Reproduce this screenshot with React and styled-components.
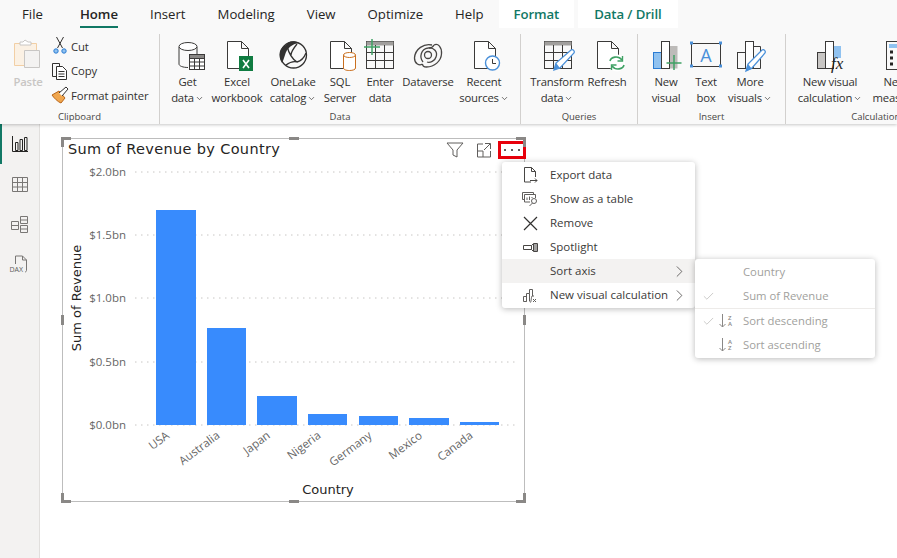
import styled, { createGlobalStyle } from "styled-components";
import { Check, ChevronRight, ChevronDown } from "lucide-react";

const uiFont = `"Open Sans", "Noto Sans", sans-serif`;

const GlobalStyle = createGlobalStyle`
  html, body { margin: 0; padding: 0; background: #fff; }
  body { font-family: ${uiFont}; color: #252423; }
`;

const INK = "#3b3a39";
const BLUE = "#4a90d9";
const GREEN = "#3fa164";

const GetDataIcon = () => (
  <Glyph viewBox="0 0 36 36" fill="none" stroke={INK}>
    <path d="M9 9v17c0 2 4 3.500 9 3.500M27 9v7" />
    <ellipse cx="18" cy="8.500" rx="9" ry="4" fill="#fff" />
    <rect x="19.500" y="16.500" width="15" height="15" fill="#fff" />
    <rect x="19.500" y="16.500" width="15" height="4" fill="#8a8886" />
    <path d="M19.500 24h15M19.500 28h15M24.500 20v11M29.500 20v11" />
  </Glyph>
);

const FileShape = () => <path d="M8.500 3.500h14l7 7v20h-21z M22.500 3.500v7h7" fill="#fff" stroke={INK} />;

const ExcelIcon = () => (
  <Glyph viewBox="0 0 36 36" fill="none">
    <FileShape />
    <rect x="20" y="18" width="14" height="15" fill="#107c41" />
    <path d="M24 22l6 8M30 22l-6 8" stroke="#fff" strokeWidth="1.600" />
  </Glyph>
);

const OneLakeIcon = () => (
  <Glyph viewBox="0 0 36 36" fill="none" stroke="#323130" strokeWidth="1.300">
    <circle cx="18.500" cy="17" r="13" />
    <path d="M7 25C2 17 5 9 11 7c2-4 8-5 13-2-7 1-12 5-14 12-1 3-2 6-3 8z" fill="#323130" stroke="none" />
    <path d="M12 8c2 8 5 13 10 16 4-1 7-4 9-9M11 27c4-3 8-4 11-3M22 6c-4 5-6 8-6 11" />
  </Glyph>
);

const SqlIcon = () => (
  <Glyph viewBox="0 0 36 36" fill="none">
    <FileShape />
    <path d="M21.500 17v13c0 1.500 2.500 2.500 6 2.500s6-1 6-2.500V17" fill="#fff" stroke="#ca6f1e" />
    <ellipse cx="27.500" cy="17" rx="6" ry="2.500" fill="#fff" stroke="#ca6f1e" />
  </Glyph>
);

const EnterDataIcon = () => (
  <Glyph viewBox="0 0 36 36" fill="none" stroke={INK}>
    <rect x="4.500" y="3.500" width="27" height="27" />
    <rect x="4.500" y="3.500" width="27" height="4" fill="#a19f9d" stroke="none" />
    <path d="M4.500 14.500h27M4.500 22.500h27M13.500 7v23M22.500 7v23" />
    <path d="M10 1v16M2 9h16" stroke={GREEN} strokeWidth="1.500" />
  </Glyph>
);

const DataverseIcon = () => (
  <Glyph viewBox="0 0 36 36" fill="none" stroke="#484644" strokeWidth="1.300">
    <path d="M22 7C14 5 5 11 4.500 20c0 6 5 8 8 6" />
    <path d="M24 7c4-2 8 2 7.500 9-.5 7-7 13-15 13-2 0-4-1-4-3" />
    <path d="M13 24c-4-5-2-13 5-14 6-1 10 4 8 9-1 4-6 6-9 5" />
    <path d="M24 7c-1 2-3 3-5 3" />
    <circle cx="18" cy="17" r="3.500" />
  </Glyph>
);

const RecentIcon = () => (
  <Glyph viewBox="0 0 36 36" fill="none">
    <FileShape />
    <circle cx="26.500" cy="25" r="7" fill="#fff" stroke={BLUE} strokeWidth="1.400" />
    <path d="M26.500 21v4.500h3.500" stroke={INK} />
  </Glyph>
);

const TransformIcon = () => (
  <Glyph viewBox="0 0 36 36" fill="none" stroke={INK}>
    <rect x="5.500" y="3.500" width="27" height="27" />
    <rect x="5.500" y="3.500" width="27" height="4" fill="#a19f9d" stroke="none" />
    <path d="M5.500 14.500h27M5.500 22.500h27M14.500 7v23M23.500 7v23" />
    <path d="M15 32l2-7L32 12c2-1 4 1 3 3L21 30z" fill="#fff" stroke={BLUE} strokeWidth="1.300" />
    <path d="M15 32l2-7 4 5z" fill={BLUE} stroke="none" />
  </Glyph>
);

const RefreshIcon = () => (
  <Glyph viewBox="0 0 36 36" fill="none">
    <FileShape />
    <circle cx="28" cy="25" r="8.500" fill="#fff" stroke="none" />
    <path d="M21 23c1-4 8-6 12-1M35 27c-1 4-8 6-12 1" stroke={GREEN} strokeWidth="1.600" />
    <path d="M33.500 18v5h-5M22.500 32v-5h5" stroke={GREEN} strokeWidth="1.400" />
  </Glyph>
);

const NewVisualIcon = () => (
  <Glyph viewBox="0 0 36 36" fill="none" stroke={INK}>
    <rect x="5.500" y="14.500" width="8" height="16" fill="#90c2f0" stroke="#2b7cd3" />
    <rect x="13.500" y="3.500" width="8" height="27" fill="#fff" />
    <rect x="22" y="8" width="7.500" height="22.500" fill="#bdbbb9" stroke="none" />
    <path d="M26 17v15M18.500 25h15" stroke={GREEN} strokeWidth="1.500" />
  </Glyph>
);

const TextBoxIcon = () => (
  <Glyph viewBox="0 0 36 36" fill="none">
    <rect x="3.500" y="5.500" width="29" height="23" stroke={INK} />
    <path d="M2 5h3M31 5h3M2 28h3M31 28h3" stroke={BLUE} strokeWidth="3" />
    <text x="18" y="24" textAnchor="middle" fontSize="18" fontFamily={uiFont} fill={BLUE} stroke="none">A</text>
  </Glyph>
);

const MoreVisualsIcon = () => (
  <Glyph viewBox="0 0 36 36" fill="none" stroke={INK}>
    <rect x="5.500" y="14.500" width="8" height="16" />
    <rect x="13.500" y="3.500" width="8" height="27" fill="#fff" />
    <path d="M21.500 8.500h7v22h-7" />
    <path d="M14 33l2-7L30 12c2-1 4 1 3 3L20 30z" fill="#fff" stroke={BLUE} strokeWidth="1.300" />
    <path d="M14 33l2-7 4 5z" fill={BLUE} stroke="none" />
  </Glyph>
);

const VisualCalcIcon = () => (
  <Glyph viewBox="0 0 36 36" fill="none" stroke={INK}>
    <rect x="5.500" y="14.500" width="8" height="16" fill="#c8c6c4" />
    <rect x="13.500" y="3.500" width="8" height="27" fill="#fff" />
    <rect x="22" y="8" width="7" height="12" fill="#90c2f0" stroke="none" />
    <text x="19" y="31" fontSize="17" fontStyle="italic" fontFamily="Liberation Serif, serif" fill="#252423" stroke="none">fx</text>
  </Glyph>
);

const MeasureIcon = () => (
  <Glyph viewBox="0 0 36 36" fill="none" stroke={INK}>
    <rect x="9.500" y="3.500" width="27" height="28" />
    <rect x="12" y="6" width="22" height="4" fill="#90c2f0" stroke="none" />
    <path d="M13 14h3M20 14h3M27 14h3M13 20h3M20 20h3M27 20h3M13 26h3M20 26h3M27 26h3" stroke="#252423" strokeWidth="3" />
  </Glyph>
);

const PasteIcon = () => (
  <Glyph viewBox="0 0 36 36" fill="none">
    <path d="M4.500 5.500h22v22h-22z" fill="#fbf1e4" stroke="#f2cfa5" />
    <path d="M10 7V4h3l2-2 3 2h3v3z" fill="#fff" stroke="#c8c6c4" />
    <path d="M14.500 12.500h15v17h-15z" fill="#f3f2f1" stroke="#c8c6c4" />
  </Glyph>
);

const CutIcon = () => (
  <SmallGlyph viewBox="0 0 18 18" fill="none" stroke="#323130">
    <path d="M5.500 0l6 11M12.500 0l-6 11" />
    <circle cx="5" cy="14" r="2.200" stroke="#2b7cd3" fill="#90c2f0" />
    <circle cx="13" cy="14" r="2.200" stroke="#2b7cd3" fill="#90c2f0" />
  </SmallGlyph>
);

const CopyIcon = () => (
  <SmallGlyph viewBox="0 0 18 18" fill="none" stroke="#323130">
    <path d="M5.500 14.500h-4v-13h7v3" />
    <path d="M5.500 4.500h6l4 4v9h-10z M7.500 9.500h6M7.500 12h6M7.500 14.500h6" fill="#fff" />
  </SmallGlyph>
);

const PainterIcon = () => (
  <SmallGlyph viewBox="0 0 18 18" fill="none">
    <path d="M1 9l7-4 6 7-4 5c-3-1-7-5-9-8z" fill="#f0a64e" stroke="#b9661b" />
    <path d="M8 7l7-6 2 2-6 7" fill="#fff" stroke="#323130" />
  </SmallGlyph>
);

const ReportIcon = () => (
  <SideGlyph viewBox="0 0 18 18" fill="none" stroke="#252423">
    <path d="M1.500 1v15.500H17" />
    <path d="M4.500 7.500h2.500v8H4.500zM9 4.500h2.500v11H9zM13.500 2.500H16v13h-2.500z" />
  </SideGlyph>
);

const TableIcon = () => (
  <SideGlyph viewBox="0 0 18 18" fill="none" stroke="#797775">
    <path d="M1.500 2.500h15v14h-15zM1.500 7.500h15M1.500 12h15M6.500 2.500v14M11.500 2.500v14" />
  </SideGlyph>
);

const ModelIcon = () => (
  <SideGlyph viewBox="0 0 18 18" fill="none" stroke="#797775">
    <path d="M.5 6.500h7v8h-7zM.5 10.500h7M9.500 1.500h7v7h-7zM9.500 5h7M9.500 10.500h7v7h-7zM9.500 14h7" />
  </SideGlyph>
);

const DaxIcon = () => (
  <DaxWrap>
    <SideGlyph viewBox="0 0 18 18" fill="none" stroke="#797775">
      <path d="M4.500 9V1h7l4 4v10.500c0 1-1 1.500-1.500 1.500M11.500 1v4h4" />
    </SideGlyph>
    <DaxText>DAX</DaxText>
  </DaxWrap>
);

const FilterIcon = () => (
  <svg width="18" height="16" viewBox="0 0 18 16" fill="none" stroke="#605e5c">
    <path d="M1 1h16l-6 7v7l-4-2V8z" />
  </svg>
);

const FocusIcon = () => (
  <svg width="16" height="16" viewBox="0 0 16 16" fill="none" stroke="#605e5c">
    <path d="M7 2H1.500v13h13V9M9 1.500h5.500V7M14 2L8 8M1.500 9H7v6" />
  </svg>
);

const ExportIcon = () => (
  <svg width="15" height="16" viewBox="0 0 15 16" fill="none" stroke="#484644">
    <path d="M8 15H1.500V.5h7l4 4V10M8.500.5v4h4M7 13.500h7M12 11.500l2 2-2 2" />
  </svg>
);

const ShowTableIcon = () => (
  <svg width="16" height="16" viewBox="0 0 16 16" fill="none" stroke="#605e5c">
    <path d="M2.500 8.500H.5v-7h11V3M2.500 3.500h11V7M2.500 3.500V11H8M5 9V6.500M7.500 9V5.500M10 7V6" />
    <circle cx="12" cy="10" r="2.500" />
    <path d="M10.500 12L7.500 15" />
  </svg>
);

const RemoveIcon = () => (
  <svg width="15" height="15" viewBox="0 0 15 15" fill="none" stroke="#323130" strokeWidth="1.200">
    <path d="M1 1l13 13M14 1L1 14" />
  </svg>
);

const SpotlightIcon = () => (
  <svg width="15" height="9" viewBox="0 0 15 9" fill="none" stroke="#484644">
    <path d="M.5 2.500h8v4h-8zM8.500 2.500l2-2v8l-2-2M11 .5h3.500v8H11zM13 .5v8" />
  </svg>
);

const CalcIcon = () => (
  <svg width="14" height="15" viewBox="0 0 14 15" fill="none" stroke="#605e5c">
    <path d="M.5 13.500v-5h3v5zM3.500 13.500v-8h3v8M6.500 5.500V1.500H9.500V8" />
    <path d="M7 14.500c1.500 0 1-5 2-6.500h2M10 11l3 3M13 11l-3 3" />
  </svg>
);

const SortDownIcon = () => (
  <SortIcon>
    <svg width="7" height="14" viewBox="0 0 7 14" fill="none" stroke="#8a8886">
      <path d="M3.500 0v13M.5 10l3 3 3-3" />
    </svg>
    <SortLetters><span>Z</span><span>A</span></SortLetters>
  </SortIcon>
);

const SortUpIcon = () => (
  <SortIcon>
    <svg width="7" height="14" viewBox="0 0 7 14" fill="none" stroke="#8a8886">
      <path d="M3.500 0v13M.5 10l3 3 3-3" />
    </svg>
    <SortLetters><span>A</span><span>Z</span></SortLetters>
  </SortIcon>
);

const clipboardRows = [
  { label: "Cut", Icon: CutIcon },
  { label: "Copy", Icon: CopyIcon },
  { label: "Format painter", Icon: PainterIcon },
];

const groups = [
  {
    name: "Data",
    width: 361,
    items: [
      { w: 47, Icon: GetDataIcon, lines: ["Get", "data"], caret: true },
      { w: 52, Icon: ExcelIcon, lines: ["Excel", "workbook"] },
      { w: 60, Icon: OneLakeIcon, lines: ["OneLake", "catalog"], caret: true },
      { w: 34, Icon: SqlIcon, lines: ["SQL", "Server"] },
      { w: 46, Icon: EnterDataIcon, lines: ["Enter", "data"] },
      { w: 50, Icon: DataverseIcon, lines: ["Dataverse"] },
      { w: 62, Icon: RecentIcon, lines: ["Recent", "sources"], caret: true },
    ],
  },
  {
    name: "Queries",
    width: 117,
    items: [
      { w: 64, Icon: TransformIcon, lines: ["Transform", "data"], caret: true },
      { w: 36, Icon: RefreshIcon, lines: ["Refresh"] },
    ],
  },
  {
    name: "Insert",
    width: 148,
    pad: 6,
    items: [
      { w: 44, Icon: NewVisualIcon, lines: ["New", "visual"] },
      { w: 36, Icon: TextBoxIcon, lines: ["Text", "box"] },
      { w: 52, Icon: MoreVisualsIcon, lines: ["More", "visuals"], caret: true },
    ],
  },
  {
    name: "Calculations",
    width: 184,
    pad: 6,
    last: true,
    items: [
      { w: 76, Icon: VisualCalcIcon, lines: ["New visual", "calculation"], caret: true },
      { w: 54, Icon: MeasureIcon, lines: ["New", "measure"] },
    ],
  },
];

const axisTicks = [
  { label: "$2.0bn", y: 172 },
  { label: "$1.5bn", y: 235 },
  { label: "$1.0bn", y: 298 },
  { label: "$0.5bn", y: 362 },
  { label: "$0.0bn", y: 425 },
];

const bars = [
  { country: "USA", x: 156, w: 40, top: 210 },
  { country: "Australia", x: 207, w: 39, top: 328 },
  { country: "Japan", x: 257, w: 40, top: 396 },
  { country: "Nigeria", x: 308, w: 39, top: 414 },
  { country: "Germany", x: 359, w: 39, top: 416 },
  { country: "Mexico", x: 409, w: 40, top: 418 },
  { country: "Canada", x: 460, w: 39, top: 422 },
];

const menuRows = [
  { label: "Export data", Icon: ExportIcon },
  { label: "Show as a table", Icon: ShowTableIcon },
  { label: "Remove", Icon: RemoveIcon },
  { label: "Spotlight", Icon: SpotlightIcon },
  { label: "Sort axis", active: true, more: true },
  { label: "New visual calculation", Icon: CalcIcon, more: true },
];

const App = () => {
  return (
    <Page>
      <GlobalStyle />
      <Ribbon>
        <Tabs>
          <Tab $left={22} $right={21}>File</Tab>
          <Tab $active>Home</Tab>
          <Tab>Insert</Tab>
          <Tab>Modeling</Tab>
          <Tab>View</Tab>
          <Tab>Optimize</Tab>
          <Tab $right={15}>Help</Tab>
          <ContextTab $pad={15}>Format</ContextTab>
          <ContextTab $pad={16}>Data / Drill</ContextTab>
        </Tabs>
        <Groups>
          <Group $width={160}>
            <GroupBody $pad={8}>
              <RibbonItem $width={40}>
                <IconSlot><PasteIcon /></IconSlot>
                <ItemLabel $disabled>Paste</ItemLabel>
              </RibbonItem>
              <SmallColumn>
                {clipboardRows.map(({ label, Icon }) => (
                  <SmallRow key={label}>
                    <Icon />
                    <span>{label}</span>
                  </SmallRow>
                ))}
              </SmallColumn>
            </GroupBody>
            <GroupName>Clipboard</GroupName>
          </Group>
          {groups.map((group) => (
            <Group key={group.name} $width={group.width} $last={group.last}>
              <GroupBody $pad={group.pad ?? 4}>
                {group.items.map(({ w, Icon, lines, caret }) => (
                  <RibbonItem key={lines.join(" ")} $width={w}>
                    <IconSlot><Icon /></IconSlot>
                    {lines.map((line, i) => (
                      <ItemLabel key={line}>
                        {line}
                        {caret && i === lines.length - 1 && <ChevronDown size={9} strokeWidth={1.8} />}
                      </ItemLabel>
                    ))}
                  </RibbonItem>
                ))}
              </GroupBody>
              <GroupName>{group.name}</GroupName>
            </Group>
          ))}
        </Groups>
      </Ribbon>

      <Main>
        <Sidebar>
          <SideButton $active><ReportIcon /></SideButton>
          <SideButton><TableIcon /></SideButton>
          <SideButton><ModelIcon /></SideButton>
          <SideButton><DaxIcon /></SideButton>
        </Sidebar>
        <Canvas>
          <Visual>
            <Handle $corner="tl" />
            <Handle $corner="tr" />
            <Handle $corner="bl" />
            <Handle $corner="br" />
            <MidHandle $side="top" />
            <MidHandle $side="bottom" />
            <MidHandle $side="left" />
            <MidHandle $side="right" />
            <VisualHeader>
              <VisualTitle>Sum of Revenue by Country</VisualTitle>
              <HeaderActions>
                <FilterIcon />
                <FocusIcon />
                <MoreButton>
                  <Dot /><Dot /><Dot />
                </MoreButton>
              </HeaderActions>
            </VisualHeader>
            <Chart viewBox="63 161 458 338" width="458" height="338">
              {axisTicks.map((tick) => (
                <g key={tick.label}>
                  <line x1="135" x2="519" y1={tick.y} y2={tick.y} stroke="#c8c6c4" strokeDasharray="1.500 4.500" />
                  <AxisText x="126" y={tick.y + 4} textAnchor="end">{tick.label}</AxisText>
                </g>
              ))}
              {bars.map((bar) => (
                <g key={bar.country}>
                  <rect x={bar.x} y={bar.top} width={bar.w} height={425 - bar.top} fill="#388bfd" />
                  <AxisText
                    textAnchor="end"
                    transform={`translate(${bar.x + bar.w / 2 - 6} 437) rotate(-37)`}
                  >
                    {bar.country}
                  </AxisText>
                </g>
              ))}
              <AxisTitle textAnchor="middle" transform="translate(81 298) rotate(-90)">Sum of Revenue</AxisTitle>
              <AxisTitle textAnchor="middle" x="328" y="494">Country</AxisTitle>
            </Chart>
          </Visual>

          <Menu>
            {menuRows.map(({ label, Icon, active, more }) => (
              <MenuRow key={label} $active={active}>
                <MenuIcon>{Icon && <Icon />}</MenuIcon>
                <MenuText>{label}</MenuText>
                {more && <ChevronRight size={19} strokeWidth={1} color="#484644" />}
              </MenuRow>
            ))}
          </Menu>

          <SubMenu>
            <SubRow>
              <SubCheck />
              <SubIcon />
              <span>Country</span>
            </SubRow>
            <SubRow>
              <SubCheck><Check size={13} strokeWidth={1} /></SubCheck>
              <SubIcon />
              <span>Sum of Revenue</span>
            </SubRow>
            <SubDivider />
            <SubRow>
              <SubCheck><Check size={13} strokeWidth={1} /></SubCheck>
              <SubIcon><SortDownIcon /></SubIcon>
              <span>Sort descending</span>
            </SubRow>
            <SubRow>
              <SubCheck />
              <SubIcon><SortUpIcon /></SubIcon>
              <span>Sort ascending</span>
            </SubRow>
          </SubMenu>
        </Canvas>
      </Main>
    </Page>
  );
};

const Page = styled.div`
  width: 897px;
  height: 558px;
  overflow: hidden;
  display: flex;
  flex-direction: column;
  background: #fff;
`;

const Ribbon = styled.header`
  position: relative;
  z-index: 2;
  height: 124px;
  flex: none;
  background: #f9f9f9;
  box-shadow: 0 1px 3px rgba(0, 0, 0, 0.22);
`;

const Tabs = styled.nav`
  display: flex;
  height: 28px;
  font-size: 13.2px;
  color: #252423;
`;

const Tab = styled.div`
  position: relative;
  display: flex;
  align-items: center;
  padding: 0 ${(p) => p.$right ?? 16}px 0 ${(p) => p.$left ?? 16}px;
  font-weight: ${(p) => (p.$active ? 600 : 400)};
  &::after {
    content: "";
    display: ${(p) => (p.$active ? "block" : "none")};
    position: absolute;
    left: 16px;
    right: 16px;
    bottom: 0;
    height: 2px;
    background: #117865;
  }
`;

const ContextTab = styled.div`
  display: flex;
  align-items: center;
  padding: 0 ${(p) => p.$pad}px;
  margin-right: 4px;
  background: #fff;
  color: #117865;
  font-weight: 600;
  letter-spacing: -0.1px;
`;

const Groups = styled.div`
  display: flex;
  height: 96px;
  padding-top: 6px;
  box-sizing: border-box;
`;

const Group = styled.section`
  flex: none;
  box-sizing: border-box;
  width: ${(p) => p.$width}px;
  display: flex;
  flex-direction: column;
  border-right: ${(p) => (p.$last ? "none" : "1px solid #d2d0ce")};
`;

const GroupBody = styled.div`
  flex: 1;
  min-height: 0;
  display: flex;
  padding-left: ${(p) => p.$pad}px;
  padding-top: 4px;
`;

const GroupName = styled.div`
  height: 17px;
  line-height: 20px;
  text-align: center;
  font-size: 9.5px;
  color: #484644;
  white-space: nowrap;
`;

const RibbonItem = styled.div`
  flex: none;
  width: ${(p) => p.$width}px;
  display: flex;
  flex-direction: column;
  align-items: center;
`;

const IconSlot = styled.div`
  width: 36px;
  height: 36px;
  flex: none;
`;

const Glyph = styled.svg`
  display: block;
  width: 36px;
  height: 36px;
`;

const SmallGlyph = styled.svg`
  display: block;
  flex: none;
  width: 18px;
  height: 18px;
`;

const SideGlyph = styled.svg`
  display: block;
  width: 18px;
  height: 18px;
`;

const ItemLabel = styled.div`
  height: 16px;
  line-height: 16px;
  white-space: nowrap;
  font-size: 11.3px;
  letter-spacing: -0.2px;
  color: ${(p) => (p.$disabled ? "#c8c6c4" : "#323130")};
  font-weight: ${(p) => (p.$disabled ? 600 : 400)};
  display: flex;
  align-items: center;
  gap: 1px;
`;

const SmallColumn = styled.div`
  display: flex;
  flex-direction: column;
  gap: 8.500px;
  margin-left: 3px;
`;

const SmallRow = styled.div`
  display: flex;
  align-items: center;
  gap: 2px;
  height: 16px;
  font-size: 11.3px;
  letter-spacing: -0.1px;
  color: #323130;
  white-space: nowrap;
`;

const Main = styled.main`
  flex: 1;
  display: flex;
  min-height: 0;
`;

const Sidebar = styled.aside`
  flex: none;
  width: 40px;
  box-sizing: border-box;
  background: #f3f2f1;
  border-right: 1px solid #e1dfdd;
  display: flex;
  flex-direction: column;
`;

const SideButton = styled.div`
  height: 40px;
  display: flex;
  align-items: center;
  justify-content: center;
  box-shadow: ${(p) => (p.$active ? "inset 2px 0 0 #117865" : "none")};
`;

const DaxWrap = styled.div`
  position: relative;
  width: 18px;
  height: 18px;
`;

const DaxText = styled.span`
  position: absolute;
  left: -1px;
  bottom: 0;
  font-size: 7px;
  line-height: 7px;
  color: #605e5c;
  background: #f3f2f1;
`;

const Canvas = styled.div`
  position: relative;
  flex: 1;
  padding: 14px 0 0 22px;
`;

const Visual = styled.div`
  position: relative;
  box-sizing: border-box;
  width: 463px;
  height: 364px;
  border: 1px solid #bdbdbd;
  display: flex;
  flex-direction: column;
`;

const cornerEdges = {
  tl: "top: -2px; left: -2px; border-width: 3px 0 0 3px;",
  tr: "top: -2px; right: -2px; border-width: 3px 3px 0 0;",
  bl: "bottom: -2px; left: -2px; border-width: 0 0 3px 3px;",
  br: "bottom: -2px; right: -2px; border-width: 0 3px 3px 0;",
};

const Handle = styled.i`
  position: absolute;
  width: 7px;
  height: 7px;
  border-style: solid;
  border-color: #8a8886;
  ${(p) => cornerEdges[p.$corner]}
`;

const midEdges = {
  top: "top: -2px; left: 226px; width: 10px; height: 3px;",
  bottom: "bottom: -2px; left: 226px; width: 10px; height: 3px;",
  left: "left: -2px; top: 176px; width: 3px; height: 10px;",
  right: "right: -2px; top: 176px; width: 3px; height: 10px;",
};

const MidHandle = styled.i`
  position: absolute;
  background: #8a8886;
  ${(p) => midEdges[p.$side]}
`;

const VisualHeader = styled.div`
  flex: none;
  height: 22px;
  display: flex;
  align-items: center;
  justify-content: space-between;
  padding-left: 5px;
`;

const VisualTitle = styled.h2`
  margin: 0 0 2px;
  font-family: "DejaVu Sans", sans-serif;
  font-size: 14.5px;
  font-weight: 400;
  letter-spacing: 0.35px;
  color: #252423;
  white-space: nowrap;
`;

const HeaderActions = styled.div`
  display: flex;
  align-items: center;
  gap: 12px;
  margin-right: -2px;
`;

const MoreButton = styled.div`
  box-sizing: border-box;
  width: 28px;
  height: 18px;
  border: 3px solid #e8000b;
  display: flex;
  align-items: center;
  justify-content: center;
  gap: 5px;
  margin-left: -6px;
`;

const Dot = styled.i`
  width: 2px;
  height: 2px;
  background: #605e5c;
`;

const Chart = styled.svg`
  display: block;
  flex: none;
`;

const AxisText = styled.text`
  font-family: ${uiFont};
  font-size: 11.5px;
  fill: #666666;
`;

const AxisTitle = styled.text`
  font-family: "DejaVu Sans", sans-serif;
  font-size: 13px;
  fill: #252423;
`;

const Menu = styled.div`
  position: absolute;
  left: 462px;
  top: 38px;
  width: 193px;
  padding: 1px 0;
  background: #fff;
  border-radius: 3px;
  box-shadow: 0 1px 6px rgba(0, 0, 0, 0.28);
  z-index: 3;
`;

const MenuRow = styled.div`
  height: 24px;
  display: flex;
  align-items: center;
  padding-right: 6px;
  background: ${(p) => (p.$active ? "#f3f2f1" : "transparent")};
`;

const MenuIcon = styled.div`
  flex: none;
  width: 48px;
  padding-right: 8px;
  box-sizing: border-box;
  display: flex;
  justify-content: center;
  padding-left: 16px;
`;

const MenuText = styled.span`
  flex: 1;
  font-size: 11.5px;
  padding-bottom: 2px;
  color: #3b3a39;
  white-space: nowrap;
`;

const SubMenu = styled.div`
  position: absolute;
  left: 655px;
  top: 135px;
  width: 180px;
  padding: 1px 0;
  background: #fff;
  border-radius: 3px;
  box-shadow: 0 1px 6px rgba(0, 0, 0, 0.28);
  z-index: 4;
`;

const SubRow = styled.div`
  height: 24px;
  display: flex;
  align-items: center;
  font-size: 11.3px;
  color: #a19f9d;
  white-space: nowrap;
  & > span {
    padding-bottom: 2px;
  }
`;

const SubCheck = styled.div`
  flex: none;
  width: 24px;
  padding-left: 7px;
  box-sizing: border-box;
  display: flex;
`;

const SubIcon = styled.div`
  flex: none;
  width: 24px;
`;

const SubDivider = styled.div`
  height: 1px;
  margin-bottom: 0;
  background: #edebe9;
`;

const SortIcon = styled.div`
  display: flex;
  align-items: center;
  gap: 2px;
`;

const SortLetters = styled.div`
  display: flex;
  flex-direction: column;
  font-size: 6px;
  line-height: 6.500px;
  font-weight: 600;
  color: #8a8886;
`;

export default App;
